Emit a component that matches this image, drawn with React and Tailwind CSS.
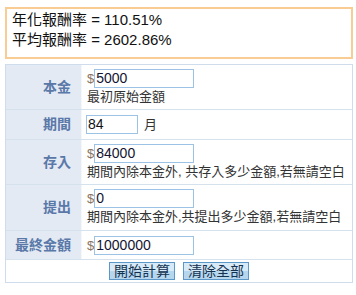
import React from "react";

const font = { fontFamily: '"Liberation Sans", "Noto Sans CJK TC", sans-serif' };

function Label({ children }) {
  return (
    <div className="w-[76px] shrink-0 bg-[#e3eaf4] border-r border-[#f4f7fb] flex items-center justify-end pr-[10px] text-[14px] font-bold text-[#5a78a8]">
      {children}
    </div>
  );
}

function Money({ value }) {
  return (
    <div className="flex items-center">
      <span className="text-[13px] text-[#8a7560] leading-none">$</span>
      <input
        defaultValue={value}
        className="w-[100px] h-[19px] border border-[#9cc3e6] px-[1px] text-[14px] text-[#141432] outline-none"
        style={font}
      />
    </div>
  );
}

export default function App() {
  return (
    <div className="w-[356px] h-[295px] bg-white pt-[7px] text-[#333]" style={font}>
      <div className="ml-[5px] w-[348px] h-[52px] border-2 border-[#f9cc93] pl-[5px] pt-[1px] text-[15px] leading-[20px] text-[#111]">
        <div>年化報酬率 = 110.51%</div>
        <div>平均報酬率 = 2602.86%</div>
      </div>

      <div className="ml-[5px] mt-[5px] w-[348px] border border-[#cfdcec]">
        <div className="flex h-[45px] border-b border-[#d6e1ee]">
          <Label>本金</Label>
          <div className="pl-[5px] pt-[4px]">
            <Money value="5000" />
            <div className="text-[13px] leading-[18px]">最初原始金額</div>
          </div>
        </div>

        <div className="flex h-[30px] border-b border-[#d6e1ee]">
          <Label>期間</Label>
          <div className="pl-[4px] flex items-center">
            <input
              defaultValue="84"
              className="w-[52px] h-[19px] border border-[#9cc3e6] px-[1px] text-[14px] text-[#111] outline-none"
              style={font}
            />
            <span className="ml-[6px] text-[13px]">月</span>
          </div>
        </div>

        <div className="flex h-[45px] border-b border-[#d6e1ee]">
          <Label>存入</Label>
          <div className="pl-[5px] pt-[4px]">
            <Money value="84000" />
            <div className="text-[13px] leading-[18px] whitespace-nowrap">期間內除本金外, 共存入多少金額,若無請空白</div>
          </div>
        </div>

        <div className="flex h-[46px] border-b border-[#d6e1ee]">
          <Label>提出</Label>
          <div className="pl-[5px] pt-[4px]">
            <Money value="0" />
            <div className="text-[13px] leading-[18px] whitespace-nowrap">期間內除本金外,共提出多少金額,若無請空白</div>
          </div>
        </div>

        <div className="flex h-[29px] border-b border-[#d6e1ee]">
          <Label>最終金額</Label>
          <div className="pl-[5px] flex items-center">
            <Money value="1000000" />
          </div>
        </div>

        <div className="h-[22px] flex items-center justify-center gap-[8px]">
          <button className="w-[66px] h-[18px] border border-[#5b98c9] bg-[linear-gradient(#d6eaf8_50%,#b6d6ee_50%)] text-[14px] leading-none text-[#14324f]">
            開始計算
          </button>
          <button className="w-[66px] h-[18px] border border-[#5b98c9] bg-[linear-gradient(#d6eaf8_50%,#b6d6ee_50%)] text-[14px] leading-none text-[#14324f]">
            清除全部
          </button>
        </div>
      </div>
    </div>
  );
}
